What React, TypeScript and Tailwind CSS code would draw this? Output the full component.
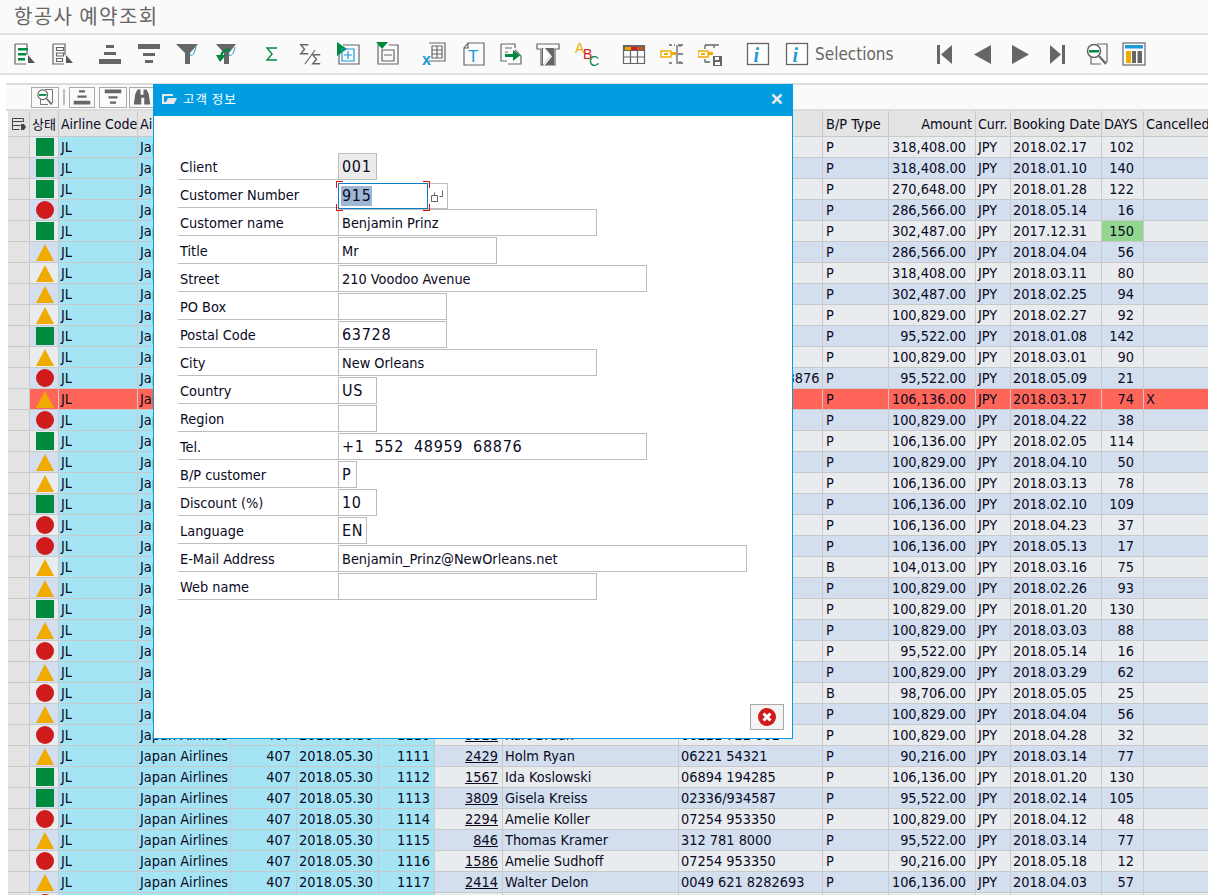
import { type ReactNode } from 'react'

const GREY = '#666'
const BLUE = '#1b9ad6'
const GREEN = '#008a3e'
const YELLOW = '#f0ab00'
const RED = '#cf1b1b'

type Status = 'g' | 'r' | 'y'
type Row = {
  st: Status
  bp?: string
  amount: string
  date: string
  days: string
  id?: string
  cust?: string
  name?: string
  tel?: string
  x?: string
}

const right: [Status, string, string, string, string?][] = [
  ['g', '318,408.00', '2018.02.17', '102'],
  ['g', '318,408.00', '2018.01.10', '140'],
  ['g', '270,648.00', '2018.01.28', '122'],
  ['r', '286,566.00', '2018.05.14', '16'],
  ['g', '302,487.00', '2017.12.31', '150'],
  ['y', '286,566.00', '2018.04.04', '56'],
  ['y', '318,408.00', '2018.03.11', '80'],
  ['y', '302,487.00', '2018.02.25', '94'],
  ['y', '100,829.00', '2018.02.27', '92'],
  ['g', '95,522.00', '2018.01.08', '142'],
  ['y', '100,829.00', '2018.03.01', '90'],
  ['r', '95,522.00', '2018.05.09', '21'],
  ['y', '106,136.00', '2018.03.17', '74'],
  ['r', '100,829.00', '2018.04.22', '38'],
  ['g', '106,136.00', '2018.02.05', '114'],
  ['y', '100,829.00', '2018.04.10', '50'],
  ['y', '106,136.00', '2018.03.13', '78'],
  ['g', '106,136.00', '2018.02.10', '109'],
  ['r', '106,136.00', '2018.04.23', '37'],
  ['r', '106,136.00', '2018.05.13', '17'],
  ['y', '104,013.00', '2018.03.16', '75', 'B'],
  ['y', '100,829.00', '2018.02.26', '93'],
  ['g', '100,829.00', '2018.01.20', '130'],
  ['y', '100,829.00', '2018.03.03', '88'],
  ['r', '95,522.00', '2018.05.14', '16'],
  ['y', '100,829.00', '2018.03.29', '62'],
  ['r', '98,706.00', '2018.05.05', '25', 'B'],
  ['y', '100,829.00', '2018.04.04', '56'],
  ['r', '100,829.00', '2018.04.28', '32'],
  ['y', '90,216.00', '2018.03.14', '77'],
  ['g', '106,136.00', '2018.01.20', '130'],
  ['g', '95,522.00', '2018.02.14', '105'],
  ['r', '100,829.00', '2018.04.12', '48'],
  ['y', '95,522.00', '2018.03.14', '77'],
  ['r', '90,216.00', '2018.05.18', '12'],
  ['y', '106,136.00', '2018.04.03', '57'],
  ['r', '100,829.00', '2018.04.20', '40'],
]

const people: Record<number, [string, string, string]> = {
  11: ['915', 'Benjamin Prinz', '+1 552 48959 68876'],
  28: ['3321', 'Kurt Braun', '06221 722 001'],
  29: ['2429', 'Holm Ryan', '06221 54321'],
  30: ['1567', 'Ida Koslowski', '06894 194285'],
  31: ['3809', 'Gisela Kreiss', '02336/934587'],
  32: ['2294', 'Amelie Koller', '07254 953350'],
  33: ['846', 'Thomas Kramer', '312 781 8000'],
  34: ['1586', 'Amelie Sudhoff', '07254 953350'],
  35: ['2414', 'Walter Delon', '0049 621 8282693'],
  36: ['1203', 'Anna Kolb', '06221 54100'],
}

const rows: Row[] = right.map(([st, amount, date, days, bp], i) => ({
  st,
  amount,
  date,
  days,
  bp,
  id: String(1082 + i),
  cust: people[i]?.[0],
  name: people[i]?.[1],
  tel: people[i]?.[2],
  x: i === 12 ? 'X' : '',
}))

function StatusIcon({ st }: { st: Status }) {
  return (
    <svg width="18" height="18" viewBox="0 0 18 18">
      {st === 'g' && <rect width="18" height="18" fill={GREEN} />}
      {st === 'r' && <circle cx="9" cy="9" r="9" fill={RED} />}
      {st === 'y' && <path d="M9 1 18 18H0z" fill={YELLOW} />}
    </svg>
  )
}

function Cell({ className, children }: { className: string; children?: ReactNode }) {
  return (
    <div className={`flex h-full shrink-0 items-center overflow-hidden whitespace-nowrap border-r border-[#c9c9c9] ${className}`}>
      {children}
    </div>
  )
}

function GridRow({ row, index }: { row: Row; index: number }) {
  const hot = index === 12
  const stripe = hot ? 'bg-[#ff6659]' : index % 2 === 0 ? 'bg-[#e9ecef]' : 'bg-[#d3deef]'
  const cyan = hot ? 'bg-[#ff6659]' : 'bg-[#a5e4f5]'
  return (
    <div className="flex h-[21px] shrink-0 border-b border-[#c9c9c9]">
      <Cell className="w-[22px] bg-[#e4e4e4]" />
      <Cell className={`w-[29px] justify-center pl-[1px] ${stripe}`}>
        <StatusIcon st={row.st} />
      </Cell>
      <Cell className={`w-[79px] pl-[2px] ${cyan}`}>JL</Cell>
      <Cell className={`w-[93px] pl-[2px] ${cyan}`}>Japan Airlines</Cell>
      <Cell className={`w-[66px] justify-end pr-[5px] ${cyan}`}>407</Cell>
      <Cell className={`w-[82px] pl-[2px] ${cyan}`}>2018.05.30</Cell>
      <Cell className={`w-[56px] justify-end pr-[4px] ${cyan}`}>{row.id}</Cell>
      <Cell className={`w-[68px] justify-end pr-[4px] ${stripe}`}>
        <span className="underline">{row.cust}</span>
      </Cell>
      <Cell className={`w-[176px] pl-[2px] ${stripe}`}>{row.name}</Cell>
      <Cell className={`w-[144px] pl-[2px] ${stripe}`}>{row.tel}</Cell>
      <Cell className={`w-[66px] pl-[3px] ${stripe}`}>{row.bp ?? 'P'}</Cell>
      <Cell className={`w-[87px] justify-end pr-[9px] ${stripe}`}>{row.amount}</Cell>
      <Cell className={`w-[35px] pl-[2px] ${stripe}`}>JPY</Cell>
      <Cell className={`w-[91px] pl-[2px] ${stripe}`}>{row.date}</Cell>
      <Cell className={`w-[42px] justify-end pr-[9px] ${index === 4 ? 'bg-[#93d68f]' : stripe}`}>{row.days}</Cell>
      <Cell className={`w-[64px] border-r-0 pl-[2px] ${stripe}`}>{row.x}</Cell>
    </div>
  )
}

function HeaderCell({ className, children }: { className: string; children?: ReactNode }) {
  return (
    <div className={`flex h-full shrink-0 items-center overflow-hidden whitespace-nowrap border-r border-[#c9c9c9] pt-[1px] ${className}`}>
      {children}
    </div>
  )
}

const Page = ({ children }: { children: ReactNode }) => <g fill="none" stroke={GREY} strokeWidth="1.2">{children}</g>
const Cursor = () => <path d="M16 13 23 21H16z" fill="#555" />

function Sigma({ x = 0, y = 0, s = 1, color = GREY }: { x?: number; y?: number; s?: number; color?: string }) {
  return (
    <path
      transform={`translate(${x} ${y}) scale(${s})`}
      d="M11 1H1l5 6-5 6h10"
      fill="none"
      stroke={color}
      strokeWidth={1.4 / s}
    />
  )
}

const toolbarIcons: Record<string, ReactNode> = {
  details: (
    <>
      <Page><path d="M3 2H15V13M3 2V22H14" /></Page>
      <path d="M6 6h10v2.500H6zM6 11h8v2.500H6zM6 16h7v2.500H6z" fill={GREEN} />
      <Cursor />
    </>
  ),
  select: (
    <>
      <Page>
        <path d="M3 2H15V13M3 2V22H14" />
        <path d="M6.500 5.500h7v3h-7zM6.500 11h7v3h-7zM6.500 16.500h6v3h-6z" />
      </Page>
      <Cursor />
    </>
  ),
  asc: <path d="M8 3h8v3H8zM6 10h12v3H6zM1 17h22v5H1z" fill={GREY} />,
  desc: <path d="M1 2h22v5H1zM6 11h12v3H6zM8 18h8v3H8z" fill={GREY} />,
  filter: (
    <>
      <path d="M1 2h22l-8 9v11h-5V11z" fill={GREY} />
      <path d="M15 12c1 4 5 0 6-8" fill="none" stroke={BLUE} strokeWidth="1" />
    </>
  ),
  unfilter: (
    <>
      <path d="M3 2h20l-7 9v11h-5V11z" fill={GREY} />
      <path d="M16 12c1 4 5 0 6-7" fill="none" stroke={BLUE} strokeWidth="1" />
      <path d="M17 8c-4-1-8 1-9 6" fill="none" stroke={GREEN} strokeWidth="2.400" />
      <path d="M3 13h10l-6 7z" fill={GREEN} />
    </>
  ),
  sum: <Sigma x={7} y={5} color={GREEN} />,
  subsum: (
    <>
      <Sigma x={2} y={2} s={0.75} />
      <path d="M17 8 7 22" fill="none" stroke={GREY} strokeWidth="1.200" />
      <Sigma x={14} y={12} s={0.75} />
    </>
  ),
  expand: (
    <>
      <Page><path d="M7 3h16v19H3V10" /></Page>
      <path d="M1 0 11 7 1 14z" fill={GREEN} />
      <path d="M6 7h12v12H6zM12 9v8M8 13h8" fill="none" stroke={BLUE} strokeWidth="1.200" />
    </>
  ),
  collapse: (
    <>
      <Page><path d="M14 3h9v19H3V3h2M7 8h12v11H7zM9 13h8" /></Page>
      <path d="M0 0h12L6 7z" transform="translate(1 0)" fill={GREEN} />
    </>
  ),
  excel: (
    <>
      <Page><path d="M7 1h16v18H7M10 4h10v12H10zM10 8h10M10 12h10M15 4v12" /></Page>
      <text x="0" y="23" fontFamily="Liberation Sans" fontWeight="700" fontSize="16" fill={BLUE}>x</text>
    </>
  ),
  word: (
    <>
      <Page><path d="M7 1h16v22H3V6zM7 1v5H3" /></Page>
      <text x="7" y="20" fontFamily="Liberation Sans" fontSize="17" fill={BLUE}>T</text>
    </>
  ),
  export: (
    <>
      <Page><path d="M2 2h14v4M2 2v17h6M16 8l6 6v8H9M6 6h7M6 10h3" /></Page>
      <path d="M6 12h8V8l7 5.500-7 5.500v-4H6z" fill={GREEN} />
    </>
  ),
  abap: (
    <>
      <path d="M1 2h22v5h-4v16H5V7H1z" fill="none" stroke={GREY} strokeWidth="1.200" />
      <path d="M6 6h12v17H6z" fill={GREY} />
      <path d="M7 6l7 8-7 9z" fill="#fff" />
      <path d="M8 6 15 14.500 8 23" fill="none" stroke="#fff" strokeWidth="1.500" />
    </>
  ),
  abc: (
    <>
      <text x="0" y="11" fontFamily="Liberation Sans" fontSize="14" fill={YELLOW}>A</text>
      <text x="8" y="17" fontFamily="Liberation Sans" fontSize="14" fill={RED}>B</text>
      <text x="14" y="24" fontFamily="Liberation Sans" fontSize="14" fill={GREEN}>C</text>
    </>
  ),
  layout: (
    <>
      <path d="M1 3h22v6H1z" fill={GREY} />
      <path d="M3 5h6v3H3z" fill={YELLOW} />
      <path d="M9 5h6v3H9z" fill={RED} />
      <path d="M15 5h6v3h-6z" fill="#c85a10" />
      <path d="M1.500 3v18.500h21V3M1.500 15h21M8.500 9v12.500M15.500 9v12.500" fill="none" stroke={GREY} strokeWidth="1.200" />
    </>
  ),
  tree: (
    <>
      <path d="M1 9h10v6H1z" fill="#fff" stroke={YELLOW} strokeWidth="1.400" />
      <path d="M4 11h4v2H4zM11 10h5v3h-5z" fill={YELLOW} />
      <path d="M9 3h3M18 3h5M14 3h1M17 3v19M9 21h3M18 21h5M18 12h5M20 3v2M20 19v2" fill="none" stroke={GREY} strokeWidth="1.300" />
    </>
  ),
  treeSave: (
    <>
      <path d="M0 9h10v6H0z" fill="#fff" stroke={YELLOW} strokeWidth="1.400" />
      <path d="M3 11h4v2H3zM10 10h5v3h-5z" fill={YELLOW} />
      <path d="M7 3h14M7 3v4M7 17v3h5M16 3v3" fill="none" stroke={GREY} strokeWidth="1.300" />
      <path d="M15 14h9v10h-9z" fill={GREY} />
      <path d="M17 15h4v3h-4zM17 20h5v3h-5z" fill="#fff" />
    </>
  ),
  info: (
    <>
      <rect x="1.500" y="1.500" width="21" height="21" fill="#fff" stroke={GREY} strokeWidth="1.300" />
      <text x="7.500" y="20" fontFamily="Liberation Serif" fontStyle="italic" fontWeight="700" fontSize="20" fill={BLUE}>i</text>
    </>
  ),
  first: <path d="M5 3h3v19H5zM20 3v19l-11-9.500z" fill={GREY} />,
  prev: <path d="M21 3v19L4 12.500z" fill={GREY} />,
  next: <path d="M4 3v19l17-9.500z" fill={GREY} />,
  last: <path d="M4 3v19l11-9.500zM16 3h3v19h-3z" fill={GREY} />,
  find: (
    <>
      <Page><path d="M12 2h10v18h-4M6 14v8h10" /></Page>
      <circle cx="9" cy="9" r="6.500" fill="#fff" stroke={GREY} strokeWidth="1.500" />
      <path d="M4 8h10v2.500H4z" fill={GREEN} />
      <path d="M14 14l7 8" fill="none" stroke={GREY} strokeWidth="2" />
    </>
  ),
  chart: (
    <>
      <rect x="1" y="1" width="22" height="22" fill="#fff" stroke={GREY} strokeWidth="1.200" />
      <path d="M3 3h18v3.500H3z" fill={BLUE} />
      <path d="M4 9h5v12H4z" fill={YELLOW} />
      <path d="M10 9h4v12h-4zM15.500 9H20v12h-4.500z" fill={GREY} />
    </>
  ),
  binoculars: <path d="M3 8 6 2h4v7h4V2h4l3 6 2 14h-8v-9h-4v9H1z" fill={GREY} />,
}

function Tool({ name, className = '' }: { name: string; className?: string }) {
  return (
    <span className={`flex h-[38px] w-[38px] shrink-0 items-center justify-center ${className}`}>
      <svg width="24" height="24" viewBox="0 0 24 24">
        {toolbarIcons[name]}
      </svg>
    </span>
  )
}

function MiniButton({ name, className }: { name: string; className: string }) {
  return (
    <span className={`flex h-[21px] shrink-0 items-center justify-center border border-[#a9a9a9] bg-[#fafafa] ${className}`}>
      <svg width="20" height="18" viewBox="0 0 24 24">
        {toolbarIcons[name]}
      </svg>
    </span>
  )
}

type Field = { label: string; value?: string; w: string; mono?: boolean; bg?: boolean; focus?: boolean }

const fields: Field[] = [
  { label: 'Client', value: '001', w: 'w-[39px]', mono: true, bg: true },
  { label: 'Customer Number', value: '915', w: 'w-[90px]', mono: true, focus: true },
  { label: 'Customer name', value: 'Benjamin Prinz', w: 'w-[259px]' },
  { label: 'Title', value: 'Mr', w: 'w-[159px]' },
  { label: 'Street', value: '210 Voodoo Avenue', w: 'w-[309px]' },
  { label: 'PO Box', w: 'w-[109px]' },
  { label: 'Postal Code', value: '63728', w: 'w-[109px]', mono: true },
  { label: 'City', value: 'New Orleans', w: 'w-[259px]' },
  { label: 'Country', value: 'US', w: 'w-[39px]', mono: true },
  { label: 'Region', w: 'w-[39px]' },
  { label: 'Tel.', value: '+1 552 48959 68876', w: 'w-[309px]', mono: true },
  { label: 'B/P customer', value: 'P', w: 'w-[19px]', mono: true },
  { label: 'Discount (%)', value: '10', w: 'w-[39px]', mono: true },
  { label: 'Language', value: 'EN', w: 'w-[29px]', mono: true },
  { label: 'E-Mail Address', value: 'Benjamin_Prinz@NewOrleans.net', w: 'w-[409px]' },
  { label: 'Web name', w: 'w-[259px]' },
]

function FormRow({ field }: { field: Field }) {
  return (
    <div className="flex h-[28px] items-end">
      <div className="flex h-[28px] w-[160px] items-center border-b border-[#bdbdbd] pl-[2px] pt-[3px]">{field.label}</div>
      {field.focus ? (
        <>
          <div className="relative mb-[-1px] flex h-[26px] w-[90px] items-center border border-[#0a7fc4] pl-[2px]">
            <span className="bg-[#9db6d6] pl-[1px] text-[16px] leading-[20px] tracking-[0.7px]">915</span>
            <span className="absolute -left-[3px] -top-[3px] h-[7px] w-[7px] border-l border-t border-[#e01010]" />
            <span className="absolute -right-[3px] -top-[3px] h-[7px] w-[7px] border-r border-t border-[#e01010]" />
            <span className="absolute -bottom-[3px] -left-[3px] h-[7px] w-[7px] border-b border-l border-[#e01010]" />
            <span className="absolute -bottom-[3px] -right-[3px] h-[7px] w-[7px] border-b border-r border-[#e01010]" />
          </div>
          <div className="mb-[-1px] flex h-[26px] w-[20px] items-center justify-center border border-l-0 border-[#bdbdbd]">
            <svg width="14" height="14" viewBox="0 0 14 14" fill="none" stroke={GREY}>
              <path d="M.5 6.500h6v6h-6zM3.500 3.500v3M11.500 1.500v6h-3" />
            </svg>
          </div>
        </>
      ) : (
        <div
          className={`flex h-[27px] items-center border border-[#bdbdbd] pl-[3px] ${field.w} ${field.bg ? 'bg-[#ebebeb]' : ''} ${
            field.mono ? 'whitespace-pre text-[16px] tracking-[0.7px] [word-spacing:4.6px]' : 'pt-[1px]'
          }`}
        >
          {field.value}
        </div>
      )}
    </div>
  )
}

export default function App() {
  return (
    <div className="relative flex h-[895px] w-[1208px] flex-col overflow-hidden bg-white font-['DejaVu_Sans_Condensed','Noto_Sans','Noto_Sans_CJK_KR',sans-serif] text-[14.4px] leading-none text-[#0a0a1e]">
      <div className="flex h-[35px] shrink-0 items-center border-b-2 border-[#e2e2e2] bg-[#fafafa] pb-[2px] pl-[14px] font-['Noto_Sans_CJK_KR',sans-serif] text-[20px] tracking-[1.4px] text-[#666]">
        항공사 예약조회
      </div>

      <div className="flex h-[40px] shrink-0 items-center border-b-2 border-[#e2e2e2] bg-[#fafafa] pl-[5px]">
        <Tool name="details" />
        <Tool name="select" />
        <Tool name="asc" className="ml-[10px]" />
        <Tool name="desc" className="ml-[1px]" />
        <Tool name="filter" />
        <Tool name="unfilter" />
        <Tool name="sum" className="ml-[8px]" />
        <Tool name="subsum" className="ml-[1px]" />
        <Tool name="expand" />
        <Tool name="collapse" className="ml-[1px]" />
        <Tool name="excel" className="ml-[9px]" />
        <Tool name="word" className="ml-[1px]" />
        <Tool name="export" />
        <Tool name="abap" className="-ml-[1px]" />
        <Tool name="abc" className="ml-[1px]" />
        <Tool name="layout" className="ml-[9px]" />
        <Tool name="tree" />
        <Tool name="treeSave" />
        <Tool name="info" className="ml-[10px]" />
        <Tool name="info" className="ml-[1px]" />
        <span className="-ml-[1px] w-[80px] whitespace-nowrap text-[17px] text-[#666]">Selections</span>
        <Tool name="first" className="ml-[30px]" />
        <Tool name="prev" />
        <Tool name="next" />
        <Tool name="last" />
        <Tool name="find" className="ml-[1px]" />
        <Tool name="chart" className="-ml-[1px]" />
      </div>

      <div className="h-[8px] shrink-0 bg-white" />

      <div className="flex min-h-0 flex-1 flex-col overflow-hidden pl-[8px]">
        <div className="-ml-[2px] flex h-[28px] shrink-0 items-center gap-[4px] border-y-2 border-[#dcdcdc] bg-[#fafafa] pl-[25px]">
          <MiniButton name="find" className="w-[28px]" />
          <span className="h-[16px] w-[2px] bg-[#bdbdbd]" />
          <MiniButton name="asc" className="w-[26px]" />
          <MiniButton name="desc" className="w-[28px]" />
          <MiniButton name="binoculars" className="-ml-[2px] w-[26px]" />
        </div>
        <div className="flex h-[26px] shrink-0 border-b border-[#c9c9c9] bg-[#e4e4e4]">
          <HeaderCell className="w-[22px] justify-center">
            <svg width="16" height="14" viewBox="0 0 16 14" fill="none" stroke="#444">
              <path d="M1.500 1.500h11v3h-11zM1.500 4.500v8h7M1.500 8.500h8" />
              <path d="M10 7h3l2 3-2 3h-3z" fill="#444" stroke="none" />
            </svg>
          </HeaderCell>
          <HeaderCell className="w-[29px] justify-center text-[13px]">상태</HeaderCell>
          <HeaderCell className="w-[79px] pl-[2px] text-[14px]">Airline Code</HeaderCell>
          <HeaderCell className="w-[93px] pl-[2px]">Airline</HeaderCell>
          <HeaderCell className="w-[66px]" />
          <HeaderCell className="w-[82px]" />
          <HeaderCell className="w-[56px]" />
          <HeaderCell className="w-[68px]" />
          <HeaderCell className="w-[176px]" />
          <HeaderCell className="w-[144px]" />
          <HeaderCell className="w-[66px] pl-[3px]">B/P Type</HeaderCell>
          <HeaderCell className="w-[87px] justify-end pr-[3px]">Amount</HeaderCell>
          <HeaderCell className="w-[35px] pl-[2px] text-[14px]">Curr.</HeaderCell>
          <HeaderCell className="w-[91px] pl-[2px]">Booking Date</HeaderCell>
          <HeaderCell className="w-[42px] pl-[2px]">DAYS</HeaderCell>
          <HeaderCell className="w-[64px] border-r-0 pl-[2px]">Cancelled</HeaderCell>
        </div>
        {rows.map((row, i) => (
          <GridRow key={i} row={row} index={i} />
        ))}
      </div>

      <div className="absolute left-[153px] top-[84px] flex h-[655px] w-[640px] flex-col border border-[#009de0] bg-white">
        <div className="flex h-[31px] shrink-0 items-center bg-[#009de0] pb-[3px] pl-[7px] pr-[9px] font-['Noto_Sans_CJK_KR',sans-serif] text-[12.5px] tracking-[1px] text-white">
          <svg width="16" height="12" viewBox="0 0 16 12" className="mr-[6px]">
            <path d="M1 1h11v2H3v6h2L7 5h9l-3 6H1z" fill="#e8e8e8" />
          </svg>
          고객 정보
          <svg width="12" height="12" viewBox="0 0 12 12" className="ml-auto">
            <path d="M1.500 1.500l9 9M10.500 1.500l-9 9" stroke="#e8e8e8" strokeWidth="2.500" />
          </svg>
        </div>
        <div className="flex-1 pl-[24px] pt-[36px]">
          {fields.map((f) => (
            <FormRow key={f.label} field={f} />
          ))}
        </div>
        <div className="flex justify-end pb-[8px] pr-[8px]">
          <span className="flex h-[26px] w-[34px] items-center justify-center border border-[#a9a9a9] bg-[#f4f4f4]">
            <svg width="18" height="18" viewBox="0 0 18 18">
              <circle cx="9" cy="9" r="9" fill={RED} />
              <path d="M5.500 5.500l7 7M12.500 5.500l-7 7" stroke="#fff" strokeWidth="3" />
            </svg>
          </span>
        </div>
      </div>
    </div>
  )
}
